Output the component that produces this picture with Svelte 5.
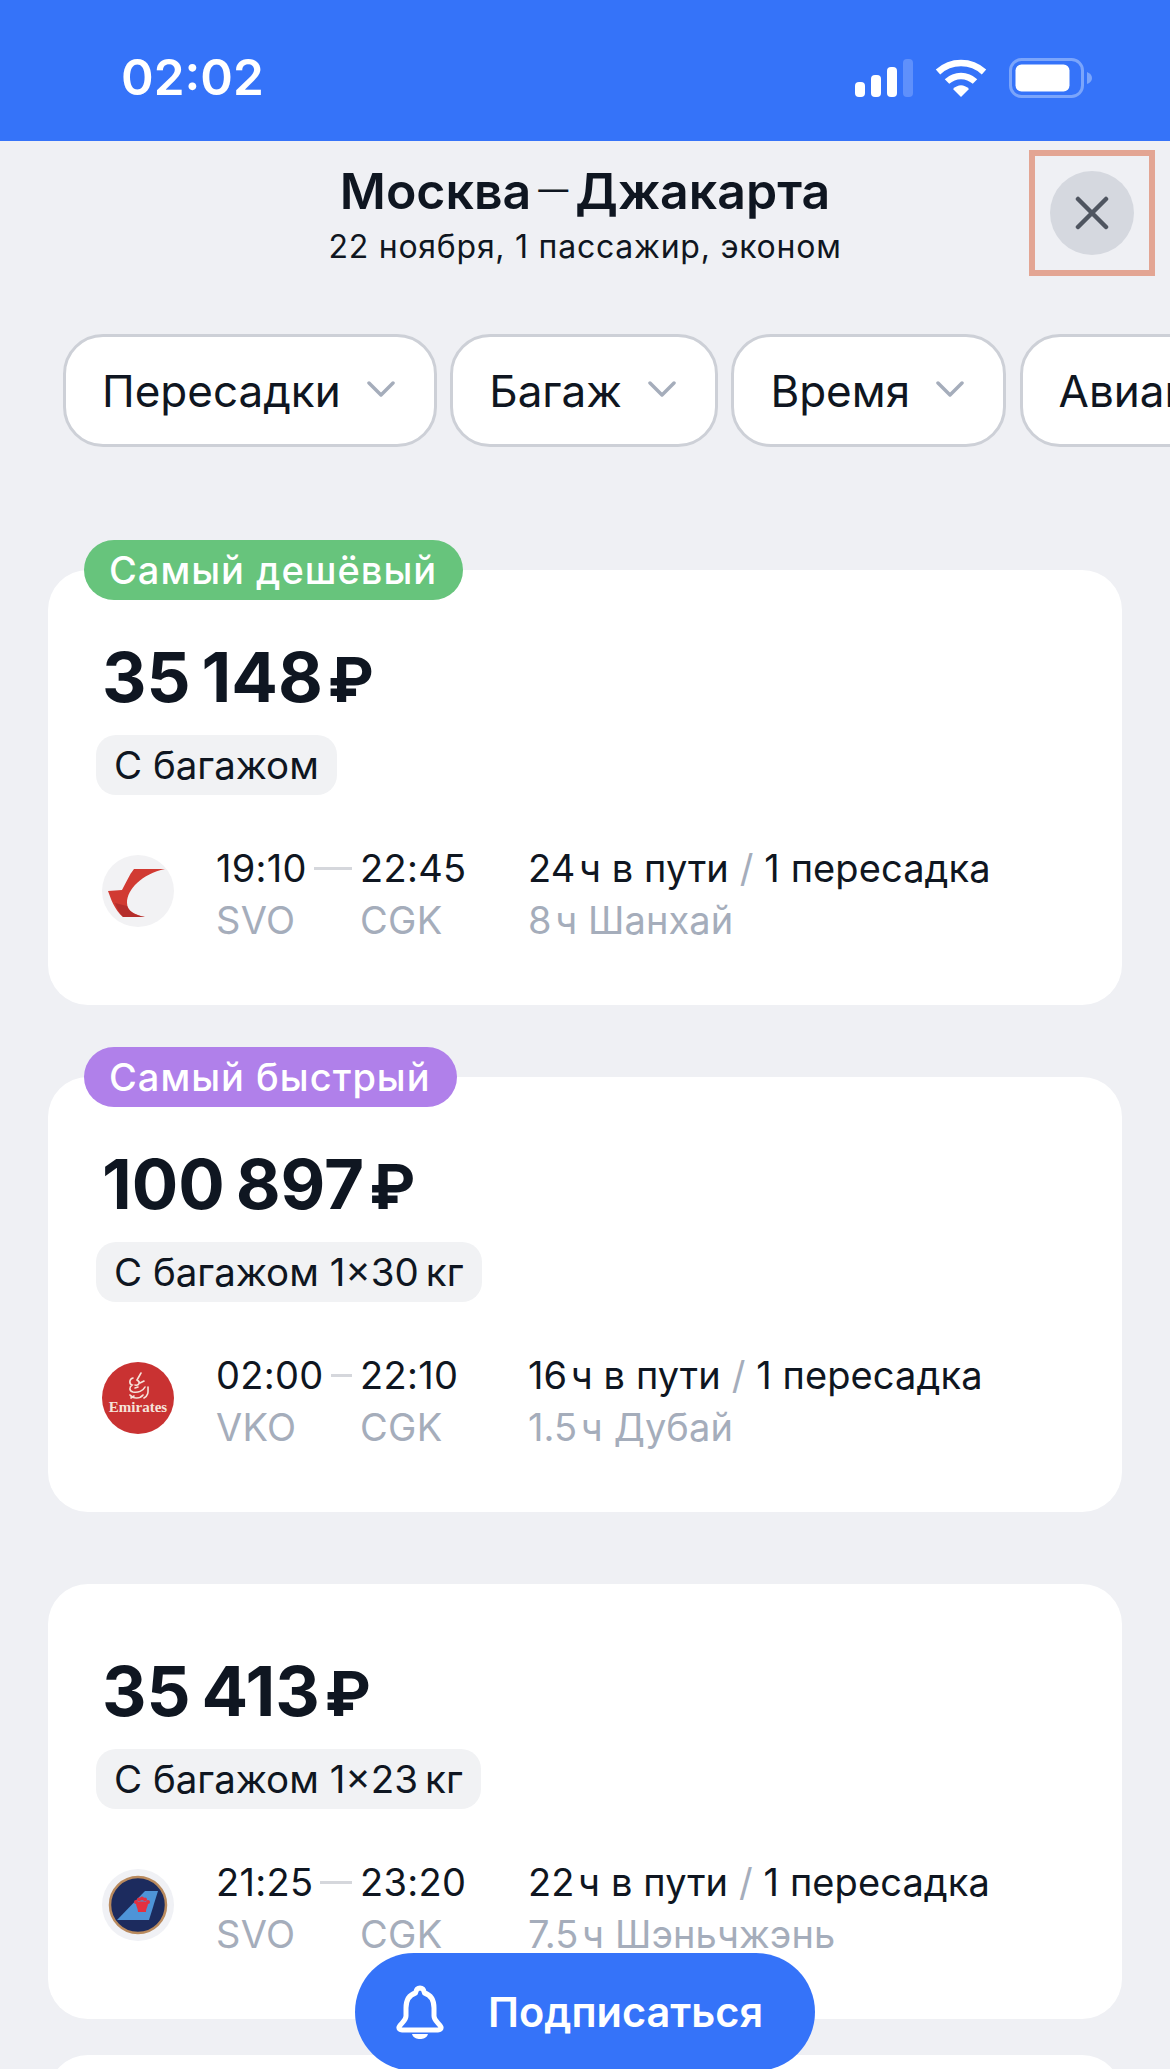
<script>
  const chips = ['Пересадки', 'Багаж', 'Время', 'Авиакомпании'];
  const flights = [
    { badge: 'Самый дешёвый', tone: 'green', price: '35\u2009148', bag: 'С багажом', logo: 'red', dep: '19:10', arr: '22:45', from: 'SVO', to: 'CGK', dur: '24\u200Aч в пути', stop: '8\u200Aч Шанхай' },
    { badge: 'Самый быстрый', tone: 'purple', price: '100\u2009897', bag: 'С багажом 1×30\u2009кг', logo: 'emirates', dep: '02:00', arr: '22:10', from: 'VKO', to: 'CGK', dur: '16\u200Aч в пути', stop: '1.5\u200Aч Дубай' },
    { price: '35\u2009413', bag: 'С багажом 1×23\u2009кг', logo: 'china', dep: '21:25', arr: '23:20', from: 'SVO', to: 'CGK', dur: '22\u200Aч в пути', stop: '7.5\u200Aч Шэньчжэнь' }
  ];
</script>

<div class="page">
  <div class="status">
    <span class="clock">02:02</span>
    <div class="indicators">
      <svg width="58" height="38" viewBox="0 0 58 38">
        <rect x="0" y="23" width="10" height="15" rx="4" fill="#fff" />
        <rect x="16" y="16" width="10" height="22" rx="4" fill="#fff" />
        <rect x="32" y="8" width="10" height="30" rx="4" fill="#fff" />
        <rect x="48" y="0" width="10" height="38" rx="4" fill="#5f90fb" />
      </svg>
      <svg width="52" height="38" viewBox="0 0 52 38">
        <path d="M3 13 C16 1 36 1 49 13" fill="none" stroke="#fff" stroke-width="6.5" stroke-linecap="butt" />
        <path d="M12 22.5 C20 15 32 15 40 22.5" fill="none" stroke="#fff" stroke-width="6.5" />
        <path d="M18 30 Q26 22.5 34 30 L26 38 Z" fill="#fff" />
      </svg>
      <svg width="84" height="40" viewBox="0 0 84 40">
        <rect x="1.5" y="1.5" width="72" height="37" rx="11" fill="none" stroke="#7ba5fb" stroke-width="3" />
        <rect x="6.5" y="6.5" width="54" height="27" rx="6" fill="#fff" />
        <path d="M78 14 Q83 16 83 20 Q83 24 78 26 Z" fill="#7ba5fb" />
      </svg>
    </div>
  </div>

  <header class="head">
    <h1>Москва<span class="dash">—</span>Джакарта</h1>
    <p>22 ноября, 1 пассажир, эконом</p>
    <div class="close-frame">
      <button class="close" aria-label="Закрыть">
        <svg width="34" height="34" viewBox="0 0 34 34">
          <path d="M3 3 L31 31 M31 3 L3 31" stroke="#4f5560" stroke-width="4.5" stroke-linecap="round" />
        </svg>
      </button>
    </div>
  </header>

  <div class="chips">
    {#each chips as chip}
      <div class="chip">
        <span>{chip}</span>
        <svg width="28" height="16" viewBox="0 0 28 16">
          <path d="M2 2 L14 14 L26 2" fill="none" stroke="#a5adbb" stroke-width="3.5" stroke-linecap="round" stroke-linejoin="round" />
        </svg>
      </div>
    {/each}
  </div>

  <main class="list">
    {#each flights as f}
      <article class="card">
        {#if f.badge}<span class="badge {f.tone}">{f.badge}</span>{/if}
        <div class="price">{f.price}<span class="rub">₽</span></div>
        <div class="bag">{f.bag}</div>
        <div class="row">
          <div class="logo">
            {#if f.logo === 'red'}
              <svg width="72" height="72" viewBox="0 0 72 72">
                <circle cx="36" cy="36" r="36" fill="#f2f2f4" />
                <path d="M63 14 L32 14 C27 20 24 28 20 35 L6 36 C9 44 12 54 21 62 L43 62 C33 60 25 56 25 48 C25 34 40 19 63 14 Z" fill="#d13a32" />
                <path d="M13 48 C15 54 18 59 21 62 L43 62 C34 60 28 58 25 51 Z" fill="#a9292a" opacity=".7" />
              </svg>
            {:else if f.logo === 'emirates'}
              <svg width="72" height="72" viewBox="0 0 72 72">
                <circle cx="36" cy="36" r="36" fill="#c93232" />
                <g fill="none" stroke="#f6e3da" stroke-width="1.6" stroke-linecap="round">
                  <path d="M39 11 L35 18 C39 20 37 24 33 23" />
                  <path d="M31 16 C27 17 27 22 30 23 C27 25 27 29 31 30 C36 31 41 29 43 25" />
                  <path d="M46 25 C46 29 47 33 42 36 M28 33 C31 37 38 37 41 33" />
                  <path d="M33 26 L36 25 M38 21 L42 19 M29 36 L32 34" />
                </g>
                <text class="emirates" x="36" y="50" text-anchor="middle">Emirates</text>
              </svg>
            {:else}
              <svg width="72" height="72" viewBox="0 0 72 72">
                <circle cx="36" cy="36" r="36" fill="#f0f1f5" />
                <circle cx="36" cy="36" r="28" fill="#1c2b5e" stroke="#b98a5e" stroke-width="2.5" />
                <path d="M43 22 L56 22 L47 51 L15 51 Z" fill="#4e94d8" />
                <g fill="#e4303f">
                  <circle cx="34" cy="33" r="2" />
                  <circle cx="37" cy="30.500" r="2" />
                  <circle cx="40" cy="29.500" r="2" />
                  <circle cx="43" cy="30.500" r="2" />
                  <circle cx="46" cy="33" r="2" />
                  <path d="M34 34 C36 32 44 32 46 34 C46 38 44 39 44 43 L36 43 C36 39 34 38 34 34 Z" />
                </g>
              </svg>
            {/if}
          </div>
          <div class="times">
            <div class="dep"><span>{f.dep}</span><i></i></div>
            <div>{f.arr}</div>
            <div class="muted">{f.from}</div>
            <div class="muted">{f.to}</div>
          </div>
          <div class="info">
            <div>{f.dur} <span class="slash">/</span> 1 пересадка</div>
            <div class="muted">{f.stop}</div>
          </div>
        </div>
      </article>
    {/each}
    <article class="card stub"></article>
  </main>

  <button class="subscribe">
    <svg width="48" height="54" viewBox="0 0 48 54">
      <path d="M24 3 C27 3 28 5 28.500 8 C35 10 38 15 38 23 L38 31 C38 36 43 38 45 42 C45.500 44 44 45 42 45 L6 45 C4 45 2.500 44 3 42 C5 38 10 36 10 31 L10 23 C10 15 13 10 19.500 8 C20 5 21 3 24 3 Z" fill="none" stroke="#fff" stroke-width="5" stroke-linejoin="round" />
      <path d="M16 49 L32 49 C31 53 27 54 24 54 C21 54 17 53 16 49 Z" fill="#fff" />
    </svg>
    <span>Подписаться</span>
  </button>
</div>

<style>
  :global(body) {
    margin: 0;
    background: #eff0f4;
  }

  .page {
    position: relative;
    width: 1170px;
    height: 2069px;
    overflow: hidden;
    background: #eff0f4;
    font-family: Inter, "Noto Sans", sans-serif;
    color: #0f1621;
  }

  .status {
    display: flex;
    align-items: center;
    justify-content: space-between;
    box-sizing: border-box;
    height: 141px;
    padding: 14px 77px 0 121px;
    background: #3573f9;
    color: #fff;
  }

  .clock {
    font-size: 49.500px;
    font-weight: 600;
    line-height: 1;
  }

  .indicators {
    display: flex;
    align-items: center;
    gap: 22px;
    margin-top: 1px;
  }

  .head {
    position: relative;
    box-sizing: border-box;
    height: 193px;
    padding-top: 19px;
    text-align: center;
  }

  .head h1 {
    margin: 0;
    font-size: 50px;
    font-weight: 600;
    line-height: 58px;
  }

  .dash {
    margin: 0 7px;
    font-size: 30px;
    font-weight: 400;
    vertical-align: 9px;
  }

  .head p {
    margin: 7px 0 0;
    font-size: 32px;
    line-height: 40px;
    letter-spacing: 0.750px;
  }

  .close-frame {
    position: absolute;
    top: 9px;
    right: 15px;
    display: flex;
    align-items: center;
    justify-content: center;
    box-sizing: border-box;
    width: 126px;
    height: 126px;
    border: 6px solid #e3a593;
  }

  .close {
    display: flex;
    align-items: center;
    justify-content: center;
    width: 84px;
    height: 84px;
    padding: 0;
    border: 0;
    border-radius: 50%;
    background: #d5d8df;
  }

  .chips {
    display: flex;
    gap: 13.500px;
    box-sizing: border-box;
    width: 1170px;
    padding-left: 63px;
    overflow: hidden;
  }

  .chip {
    display: flex;
    flex: none;
    align-items: center;
    gap: 26px;
    box-sizing: border-box;
    height: 113px;
    padding: 0 39px 0 36px;
    border: 3px solid #cdd0d7;
    border-radius: 40px;
    background: #fff;
    font-size: 44px;
  }

  .chip svg {
    margin-top: -3px;
  }

  .list {
    display: flex;
    flex-direction: column;
    gap: 72px;
    padding: 123px 48px 0;
  }

  .card {
    position: relative;
    flex: none;
    box-sizing: border-box;
    height: 435px;
    padding: 73px 54px 0;
    border-radius: 40px;
    background: #fff;
  }

  .stub {
    margin-top: -36px;
  }

  .badge {
    position: absolute;
    top: -30px;
    left: 36px;
    height: 60px;
    padding: 0 26px 0 25px;
    border-radius: 30px;
    color: #fff;
    font-size: 38px;
    font-weight: 500;
    letter-spacing: 1px;
    line-height: 60px;
  }

  .green {
    background: #67c47c;
  }

  .purple {
    background: #b080ea;
  }

  .price {
    font-size: 69px;
    font-weight: 700;
    line-height: 68px;
  }

  .rub {
    margin-left: 5px;
    font-size: 62px;
  }

  .bag {
    width: fit-content;
    height: 60px;
    margin: 21px 0 0 -6px;
    padding: 0 18px;
    border-radius: 20px;
    background: #f1f2f4;
    font-size: 38.500px;
    line-height: 60px;
  }

  .row {
    display: flex;
    margin-top: 60px;
    font-size: 38px;
    line-height: 52px;
  }

  .logo {
    width: 72px;
    height: 72px;
    margin-right: 42px;
  }

  .logo svg {
    display: block;
  }

  .emirates {
    fill: #f6e3da;
    font-family: "Liberation Serif", serif;
    font-size: 15px;
    font-weight: 700;
  }

  .times {
    display: grid;
    grid-template-columns: 144px 168px;
    margin-top: -13px;
    letter-spacing: 0.300px;
  }

  .dep {
    display: flex;
    align-items: center;
    padding-right: 8px;
  }

  .dep i {
    flex: 1;
    height: 3px;
    margin-left: 7px;
    background: #d5d7dc;
  }

  .info {
    margin-top: -13px;
    letter-spacing: 0.100px;
  }

  .muted {
    color: #a5adbb;
  }

  .slash {
    color: #a5adbb;
  }

  .subscribe {
    position: absolute;
    top: 1953px;
    left: 355px;
    display: flex;
    align-items: center;
    gap: 44px;
    box-sizing: border-box;
    width: 460px;
    height: 118px;
    padding: 0 0 0 41px;
    border: 0;
    border-radius: 59px;
    background: #3573f9;
    color: #fff;
    font-family: inherit;
    font-size: 41.500px;
    font-weight: 600;
  }
</style>
